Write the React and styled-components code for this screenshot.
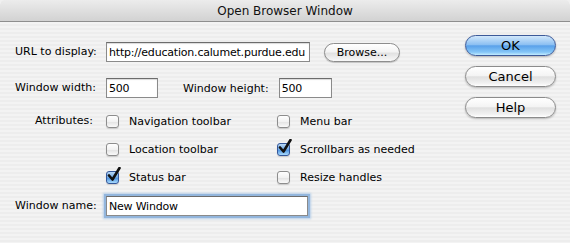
import React from "react";
import styled, { createGlobalStyle } from "styled-components";

const GlobalStyle = createGlobalStyle`
  html, body {
    margin: 0;
    padding: 0;
    background: #f0f0f0;
  }
  body {
    font-family: "DejaVu Sans", "Liberation Sans", sans-serif;
    font-size: 11px;
    color: #000;
  }
`;

const Check = ({ checked }) => (
  <Box checked={checked}>
    {checked && (
      <svg width="16" height="16" viewBox="0 0 16 16">
        <path
          d="M3 8.5 L6.5 12.5 L13.5 1"
          fill="none"
          stroke="#111"
          strokeWidth="2.6"
          strokeLinecap="round"
          strokeLinejoin="round"
        />
      </svg>
    )}
  </Box>
);

const Option = ({ label, checked }) => (
  <OptionRow>
    <Check checked={checked} />
    <span>{label}</span>
  </OptionRow>
);

const App = () => {
  return (
    <Window>
      <GlobalStyle />
      <TitleBar>Open Browser Window</TitleBar>
      <Body>
        <Form>
          <Label>URL to display:</Label>
          <Row>
            <Field width={204} value="http://education.calumet.purdue.edu" />
            <Button>Browse...</Button>
          </Row>

          <Label top={4}>Window width:</Label>
          <Row top={4}>
            <Field width={52} value="500" />
            <InlineLabel>Window height:</InlineLabel>
            <Field width={53} value="500" />
          </Row>

          <Label top={1} right>
            Attributes:
          </Label>
          <Options>
            <Option label="Navigation toolbar" />
            <Option label="Menu bar" />
            <Option label="Location toolbar" />
            <Option label="Scrollbars as needed" checked />
            <Option label="Status bar" checked />
            <Option label="Resize handles" />
          </Options>

          <Label>Window name:</Label>
          <Row>
            <Field width={202} value="New Window" focused />
          </Row>
        </Form>
        <Actions>
          <PillButton primary>OK</PillButton>
          <PillButton>Cancel</PillButton>
          <PillButton>Help</PillButton>
        </Actions>
      </Body>
    </Window>
  );
};

const Window = styled.div`
  width: 570px;
  height: 243px;
  overflow: hidden;
  background: repeating-linear-gradient(
    to bottom,
    #ededed 0px,
    #ededed 2px,
    #f3f3f3 2px,
    #f3f3f3 4px
  );
  border-radius: 5px 5px 0 0;
`;

const TitleBar = styled.div`
  height: 21px;
  line-height: 22px;
  text-align: center;
  font-size: 12px;
  color: #111;
  background: linear-gradient(to bottom, #ececec, #d2d2d2);
  border-bottom: 1px solid #8e8e8e;
  border-radius: 5px 5px 0 0;
`;

const Body = styled.div`
  display: flex;
  justify-content: space-between;
  padding: 13px 14px 0 15px;
`;

const Form = styled.div`
  display: grid;
  grid-template-columns: 78px auto;
  column-gap: 13px;
  row-gap: 12px;
  align-items: start;
  padding-top: 7px;
`;

const Label = styled.div`
  text-align: ${({ right }) => (right ? "right" : "left")};
  line-height: 20px;
  white-space: nowrap;
  margin-top: ${({ top }) => top || 0}px;
`;

const Row = styled.div`
  display: flex;
  align-items: center;
  margin-top: ${({ top }) => top || 0}px;
`;

const InlineLabel = styled.span`
  margin: 0 10px 0 25px;
`;

const Field = styled.input.attrs({ readOnly: true })`
  box-sizing: border-box;
  width: ${({ width }) => width}px;
  height: 20px;
  padding: 0 2px;
  font: inherit;
  font-size: 11px;
  letter-spacing: -0.2px;
  color: #000;
  background: #fff;
  border: 1px solid #8a8a8a;
  border-top-color: #6c6c6c;
  box-shadow: ${({ focused }) =>
    focused ? "0 0 0 2px #93b6dd, 0 0 2px 3px #b7cfe9" : "inset 0 1px 1px rgba(0,0,0,0.15)"};
  outline: none;
`;

const Button = styled.div`
  box-sizing: border-box;
  height: 19px;
  width: 76px;
  margin-left: 14px;
  border: 1px solid #8d8d8d;
  border-radius: 10px;
  text-align: center;
  line-height: 17px;
  background: linear-gradient(to bottom, #ffffff 0%, #f4f4f4 45%, #e2e2e2 55%, #f8f8f8 100%);
  box-shadow: 0 1px 1px rgba(0, 0, 0, 0.2);
`;

const Options = styled.div`
  display: grid;
  grid-template-columns: 171px auto;
  row-gap: 14px;
  margin-top: 4px;
`;

const OptionRow = styled.div`
  display: flex;
  align-items: center;
  gap: 10px;
  height: 14px;
  white-space: nowrap;
`;

const Box = styled.div`
  position: relative;
  box-sizing: border-box;
  width: 13px;
  height: 13px;
  border: 1px solid ${({ checked }) => (checked ? "#34579a" : "#8d8d8d")};
  border-radius: 3px;
  background: ${({ checked }) =>
    checked
      ? "linear-gradient(to bottom, #b8d8f6 0%, #6fa8e4 50%, #4f94e0 55%, #a8dafc 100%)"
      : "linear-gradient(to bottom, #ffffff 0%, #f2f2f2 50%, #e4e4e4 55%, #fafafa 100%)"};
  box-shadow: 0 1px 1px rgba(0, 0, 0, 0.15);

  svg {
    position: absolute;
    left: -1px;
    top: -5px;
  }
`;

const Actions = styled.div`
  display: flex;
  flex-direction: column;
  gap: 10px;
`;

const PillButton = styled.div`
  box-sizing: border-box;
  width: 91px;
  height: 21px;
  border-radius: 11px;
  text-align: center;
  line-height: 19px;
  font-size: 13px;
  border: 1px solid ${({ primary }) => (primary ? "#3d5a99" : "#8b8b8b")};
  background: ${({ primary }) =>
    primary
      ? "linear-gradient(to bottom, #d2e8fb 0%, #8dc0f2 45%, #5aa1ea 52%, #85c6f7 85%, #c2ecff 100%)"
      : "linear-gradient(to bottom, #ffffff 0%, #f4f4f4 45%, #e0e0e0 52%, #f1f1f1 85%, #ffffff 100%)"};
  box-shadow: 0 1px 2px rgba(0, 0, 0, 0.25);
`;

export default App;
